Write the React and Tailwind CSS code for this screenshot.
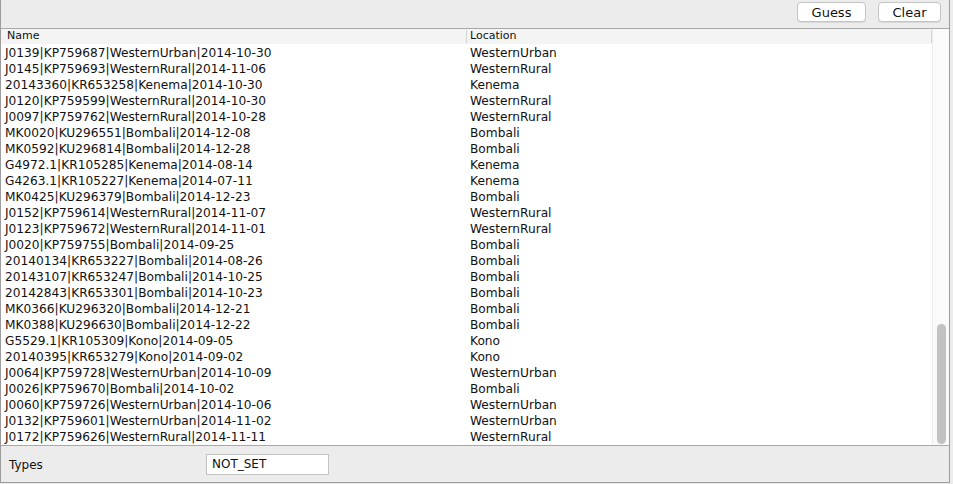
import React from 'react';

const rows = [
  ['J0139|KP759687|WesternUrban|2014-10-30', 'WesternUrban'],
  ['J0145|KP759693|WesternRural|2014-11-06', 'WesternRural'],
  ['20143360|KR653258|Kenema|2014-10-30', 'Kenema'],
  ['J0120|KP759599|WesternRural|2014-10-30', 'WesternRural'],
  ['J0097|KP759762|WesternRural|2014-10-28', 'WesternRural'],
  ['MK0020|KU296551|Bombali|2014-12-08', 'Bombali'],
  ['MK0592|KU296814|Bombali|2014-12-28', 'Bombali'],
  ['G4972.1|KR105285|Kenema|2014-08-14', 'Kenema'],
  ['G4263.1|KR105227|Kenema|2014-07-11', 'Kenema'],
  ['MK0425|KU296379|Bombali|2014-12-23', 'Bombali'],
  ['J0152|KP759614|WesternRural|2014-11-07', 'WesternRural'],
  ['J0123|KP759672|WesternRural|2014-11-01', 'WesternRural'],
  ['J0020|KP759755|Bombali|2014-09-25', 'Bombali'],
  ['20140134|KR653227|Bombali|2014-08-26', 'Bombali'],
  ['20143107|KR653247|Bombali|2014-10-25', 'Bombali'],
  ['20142843|KR653301|Bombali|2014-10-23', 'Bombali'],
  ['MK0366|KU296320|Bombali|2014-12-21', 'Bombali'],
  ['MK0388|KU296630|Bombali|2014-12-22', 'Bombali'],
  ['G5529.1|KR105309|Kono|2014-09-05', 'Kono'],
  ['20140395|KR653279|Kono|2014-09-02', 'Kono'],
  ['J0064|KP759728|WesternUrban|2014-10-09', 'WesternUrban'],
  ['J0026|KP759670|Bombali|2014-10-02', 'Bombali'],
  ['J0060|KP759726|WesternUrban|2014-10-06', 'WesternUrban'],
  ['J0132|KP759601|WesternUrban|2014-11-02', 'WesternUrban'],
  ['J0172|KP759626|WesternRural|2014-11-11', 'WesternRural'],
];

export default function App() {
  return (
    <div className="w-[953px] h-[484px] bg-[#ececec] font-['DejaVu_Sans',sans-serif] text-[#111]">
      <div className="w-[950px] h-[483px] flex flex-col border-l border-r border-b border-[#9c9c9c]">
        {/* toolbar */}
        <div className="h-[28px] flex justify-end items-start pt-[2px] pr-[8px] gap-[12px]">
          <button className="w-[69px] h-[20px] bg-white border border-[#c4c4c4] rounded-[4px] text-[13px] leading-none shadow-[0_1px_0_rgba(0,0,0,0.08)]">
            Guess
          </button>
          <button className="w-[63px] h-[20px] bg-white border border-[#c4c4c4] rounded-[4px] text-[13px] leading-none shadow-[0_1px_0_rgba(0,0,0,0.08)]">
            Clear
          </button>
        </div>

        {/* table */}
        <div className="h-[418px] flex border-t border-b border-[#a8a8a8] bg-white">
          <div className="flex-1 flex flex-col">
            <div className="h-[15px] flex bg-[#f4f4f4] text-[11px] leading-[14px]">
              <div className="w-[465px] pl-[6px]">Name</div>
              <div className="flex-1 pl-[3px] border-l border-[#d4d4d4] my-[1px] leading-[12px]">Location</div>
              <div className="w-px bg-[#d4d4d4] my-[1px]" />
            </div>
            {rows.map(([name, loc]) => (
              <div key={name} className="h-[16px] flex text-[12.2px] leading-[19px] whitespace-nowrap">
                <div className="w-[466px] pl-[4px]">{name}</div>
                <div className="flex-1 pl-[3px]">{loc}</div>
              </div>
            ))}
          </div>
          <div className="w-[17px] bg-[#fafafa] border-l border-[#ececec] flex flex-col justify-end items-center pb-[1px]">
            <div className="w-[9px] h-[120px] rounded-full bg-[#c2c2c2]" />
          </div>
        </div>

        {/* bottom panel */}
        <div className="flex-1 flex items-center">
          <span className="w-[205px] pl-[8px] text-[12px] leading-[20px] pt-[2px]">Types</span>
          <div className="w-[123px] h-[21px] bg-white border border-[#c2c2c2] text-[12px] leading-[19px] pl-[5px] mt-[1px]">
            NOT_SET
          </div>
        </div>
      </div>
    </div>
  );
}
